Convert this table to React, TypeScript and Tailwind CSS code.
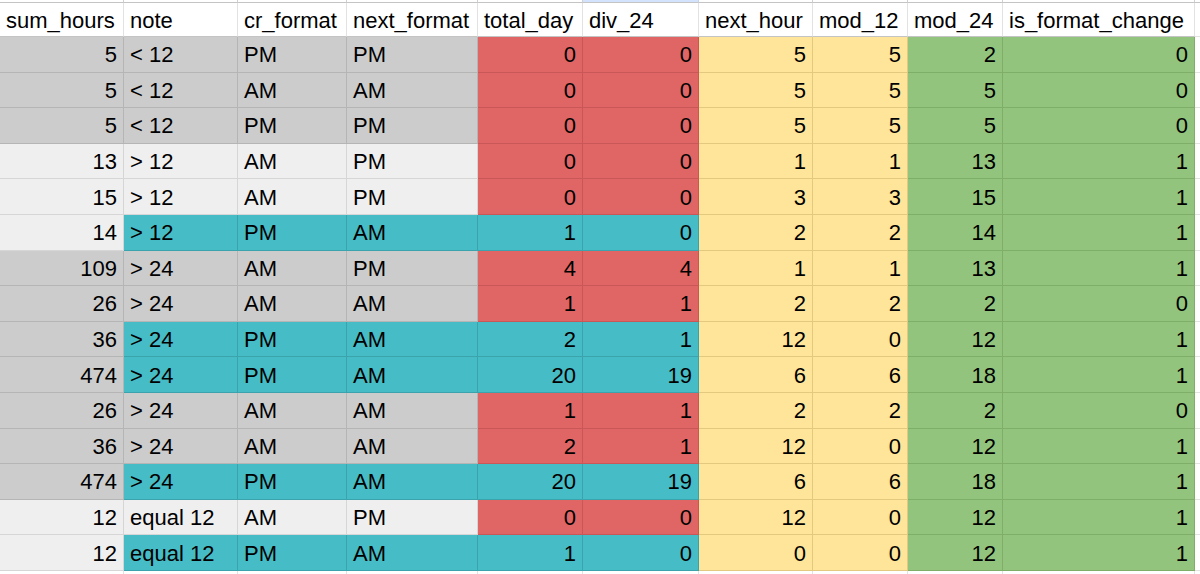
import React from "react";

type C = "g" | "l" | "r" | "t" | "y" | "n" | "w";

const FILL: Record<C, string> = {
  g: "bg-[#cccccc] border-[#b5b5b5]",
  l: "bg-[#efefef] border-[#d6d6d6]",
  r: "bg-[#e06666] border-[#c95757]",
  t: "bg-[#46bdc6] border-[#3aa3ab]",
  y: "bg-[#ffe599] border-[#e3c97f]",
  n: "bg-[#93c47d] border-[#7fae69]",
  w: "bg-white border-[#e2e2e2]",
};

const headers = [
  "sum_hours",
  "note",
  "cr_format",
  "next_format",
  "total_day",
  "div_24",
  "next_hour",
  "mod_12",
  "mod_24",
  "is_format_change",
];

// right aligned columns
const RIGHT = [true, false, false, false, true, true, true, true, true, true];

const rows: { v: (string | number)[]; c: C[] }[] = [
  { v: [5, "< 12", "PM", "PM", 0, 0, 5, 5, 2, 0], c: ["g", "g", "g", "g", "r", "r", "y", "y", "n", "n"] },
  { v: [5, "< 12", "AM", "AM", 0, 0, 5, 5, 5, 0], c: ["g", "g", "g", "g", "r", "r", "y", "y", "n", "n"] },
  { v: [5, "< 12", "PM", "PM", 0, 0, 5, 5, 5, 0], c: ["g", "g", "g", "g", "r", "r", "y", "y", "n", "n"] },
  { v: [13, "> 12", "AM", "PM", 0, 0, 1, 1, 13, 1], c: ["l", "l", "l", "l", "r", "r", "y", "y", "n", "n"] },
  { v: [15, "> 12", "AM", "PM", 0, 0, 3, 3, 15, 1], c: ["l", "l", "l", "l", "r", "r", "y", "y", "n", "n"] },
  { v: [14, "> 12", "PM", "AM", 1, 0, 2, 2, 14, 1], c: ["l", "t", "t", "t", "t", "t", "y", "y", "n", "n"] },
  { v: [109, "> 24", "AM", "PM", 4, 4, 1, 1, 13, 1], c: ["g", "g", "g", "g", "r", "r", "y", "y", "n", "n"] },
  { v: [26, "> 24", "AM", "AM", 1, 1, 2, 2, 2, 0], c: ["g", "g", "g", "g", "r", "r", "y", "y", "n", "n"] },
  { v: [36, "> 24", "PM", "AM", 2, 1, 12, 0, 12, 1], c: ["g", "t", "t", "t", "t", "t", "y", "y", "n", "n"] },
  { v: [474, "> 24", "PM", "AM", 20, 19, 6, 6, 18, 1], c: ["g", "t", "t", "t", "t", "t", "y", "y", "n", "n"] },
  { v: [26, "> 24", "AM", "AM", 1, 1, 2, 2, 2, 0], c: ["g", "g", "g", "g", "r", "r", "y", "y", "n", "n"] },
  { v: [36, "> 24", "AM", "AM", 2, 1, 12, 0, 12, 1], c: ["g", "g", "g", "g", "r", "r", "y", "y", "n", "n"] },
  { v: [474, "> 24", "PM", "AM", 20, 19, 6, 6, 18, 1], c: ["g", "t", "t", "t", "t", "t", "y", "y", "n", "n"] },
  { v: [12, "equal 12", "AM", "PM", 0, 0, 12, 0, 12, 1], c: ["l", "l", "l", "l", "r", "r", "y", "y", "n", "n"] },
  { v: [12, "equal 12", "PM", "AM", 1, 0, 0, 0, 12, 1], c: ["l", "t", "t", "t", "t", "t", "y", "y", "n", "n"] },
];

const GRID =
  "grid grid-cols-[124px_114px_109px_131px_105px_116px_114px_95px_95px_192px_1fr]";

export default function App() {
  return (
    <div
      className="w-[1200px] h-[574px] overflow-hidden bg-white text-black text-[22px] leading-none"
      style={{ fontFamily: '"Liberation Sans", Arial, sans-serif' }}
    >
      {/* top strip (previous row, cut off) */}
      <div className={`${GRID} h-[3px]`}>
        {headers.map((h, i) => (
          <div
            key={h}
            className={`border-r border-b ${
              i === 5 ? "bg-[#d3e3fd] border-[#c4d4ee]" : "bg-white border-[#d0d0d0]"
            } border-b-[#c4c4c4]`}
          />
        ))}
        <div className="border-b border-[#c4c4c4]" />
      </div>
      {/* header */}
      <div className={`${GRID} h-[34px]`}>
        {headers.map((h) => (
          <div
            key={h}
            className="flex items-center pl-[6px] pt-[2px] border-r border-b border-[#e2e2e2] border-b-[#c4c4c4] whitespace-nowrap overflow-hidden"
          >
            {h}
          </div>
        ))}
        <div className="border-b border-[#e2e2e2]" />
      </div>
      {rows.map((row, ri) => (
        <div key={ri} className={`${GRID} h-[35.6px]`}>
          {row.v.map((v, ci) => (
            <div
              key={ci}
              className={`flex items-center pt-[2px] border-r border-b whitespace-nowrap overflow-hidden ${
                FILL[row.c[ci]]
              } ${RIGHT[ci] ? "justify-end pr-[6px]" : "pl-[6px]"}`}
            >
              {v}
            </div>
          ))}
          <div className="border-b border-[#e2e2e2] bg-white" />
        </div>
      ))}
      <div className={`${GRID} h-[4px]`}>
        {headers.map((h) => (
          <div key={h} className="border-r border-[#e2e2e2]" />
        ))}
        <div />
      </div>
    </div>
  );
}
